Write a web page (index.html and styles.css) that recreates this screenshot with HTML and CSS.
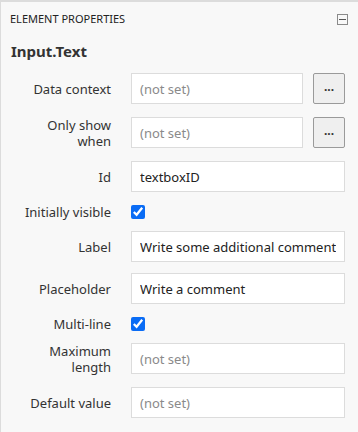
FILE: index.html
```html
<!DOCTYPE html>
<html lang="en">
<head>
  <meta charset="UTF-8">
  <title>Element properties</title>
  <link rel="stylesheet" href="styles.css">
</head>
<body>
  <div class="panel">
    <!-- Header -->
    <div class="panel_header">
      <span class="panel_title">ELEMENT PROPERTIES</span>
      <span class="collapse_btn"></span>
    </div>

    <h2 class="element_name">Input.Text</h2>

    <div class="props">
      <div class="row">
        <label class="prop_label">Data context</label>
        <div class="field">
          <input class="text_input" type="text" placeholder="(not set)">
          <button class="pick_btn">...</button>
        </div>
      </div>
      <div class="row">
        <label class="prop_label">Only show when</label>
        <div class="field">
          <input class="text_input" type="text" placeholder="(not set)">
          <button class="pick_btn">...</button>
        </div>
      </div>
      <div class="row">
        <label class="prop_label">Id</label>
        <div class="field">
          <input class="text_input" type="text" value="textboxID">
        </div>
      </div>
      <div class="row row_check">
        <label class="prop_label">Initially visible</label>
        <div class="field">
          <input class="check" type="checkbox" checked>
        </div>
      </div>
      <div class="row row_tight">
        <label class="prop_label">Label</label>
        <div class="field">
          <input class="text_input" type="text" value="Write some additional comments">
        </div>
      </div>
      <div class="row">
        <label class="prop_label">Placeholder</label>
        <div class="field">
          <input class="text_input" type="text" value="Write a comment">
        </div>
      </div>
      <div class="row row_check">
        <label class="prop_label">Multi-line</label>
        <div class="field">
          <input class="check" type="checkbox" checked>
        </div>
      </div>
      <div class="row">
        <label class="prop_label">Maximum length</label>
        <div class="field">
          <input class="text_input" type="text" placeholder="(not set)">
        </div>
      </div>
      <div class="row">
        <label class="prop_label">Default value</label>
        <div class="field">
          <input class="text_input" type="text" placeholder="(not set)">
        </div>
      </div>
    </div>
  </div>
</body>
</html>
```

FILE: styles.css
```css
/* Page */
body {
  margin: 0;
  padding: 0;
  background-color: #f8f8f8;
  font-family: 'Noto Sans', 'Open Sans', sans-serif;
  color: #333;
  overflow: hidden;
}

/* Panel */
.panel {
  height: 432px;
  box-sizing: border-box;
  border-top: 2px solid #dcdcdc;
  border-left: 1px solid #dcdcdc;
  padding: 0 14px 0 9px;
}
.panel_header {
  display: flex;
  justify-content: space-between;
  align-items: center;
  height: 33px;
}
.panel_title {
  font-size: 11px;
  color: #222;
}
.collapse_btn {
  position: relative;
  width: 9px;
  height: 9px;
  border: 1px solid #8a8a8a;
  margin-right: -4px;
  margin-top: 2px;
}
.collapse_btn::after {
  content: '';
  position: absolute;
  left: 1px;
  right: 1px;
  top: 4px;
  height: 1px;
  background-color: #555;
}

.element_name {
  font-size: 15px;
  font-weight: bold;
  color: #333;
  margin: 6px 0 12px 1px;
}

/* Property rows */
.props {
  border-bottom: 1px solid #eaeaea;
  padding-bottom: 10px;
  margin-right: -1px;
}
.row {
  display: flex;
  align-items: center;
  height: 31px;
  margin-bottom: 13px;
}
.row_check {
  height: 14px;
  margin-bottom: 12px;
}
.row_tight {
  margin-bottom: 11px;
}
.prop_label {
  width: 101px;
  flex-shrink: 0;
  text-align: right;
  font-size: 13px;
  line-height: 16px;
  color: #333;
  padding-left: 10px;
  box-sizing: border-box;
}
.field {
  flex: 1;
  min-width: 0;
  display: flex;
  gap: 10px;
  margin-left: 20px;
}
.text_input {
  flex: 1;
  width: 0;
  min-width: 0;
  height: 31px;
  box-sizing: border-box;
  border: 1px solid #dcdcdc;
  background-color: #fff;
  padding: 0 8px;
  font-family: 'Noto Sans', 'Open Sans', sans-serif;
  font-size: 13px;
  color: #222;
  outline: none;
}
.text_input::placeholder {
  color: #8a8a8a;
}
.pick_btn {
  width: 32px;
  height: 31px;
  flex-shrink: 0;
  box-sizing: border-box;
  border: 1px solid #9a9a9a;
  border-radius: 2px;
  background-color: #efefef;
  font-family: 'Noto Sans', 'Open Sans', sans-serif;
  font-size: 12px;
  font-weight: bold;
  color: #333;
  padding: 0 0 4px 0;
}
.check {
  margin: 0;
  width: 14px;
  height: 14px;
  accent-color: #0a6cf5;
}
```
